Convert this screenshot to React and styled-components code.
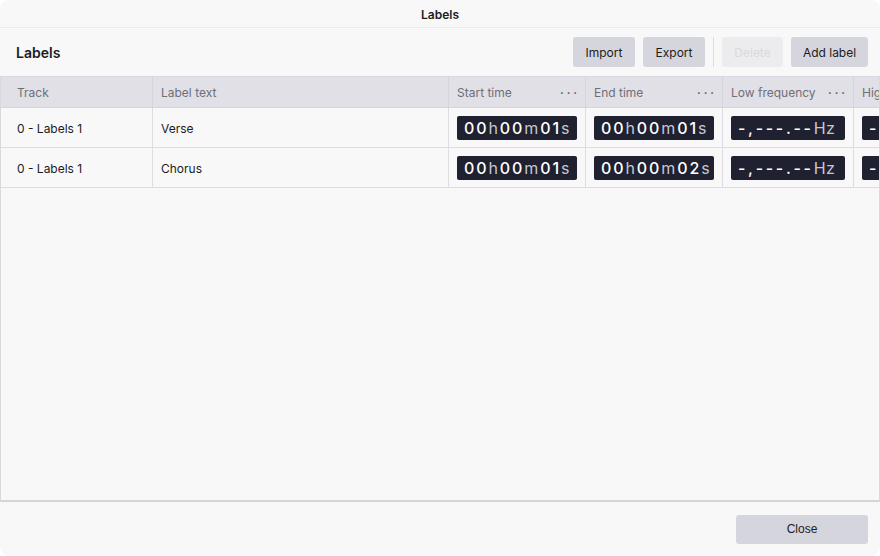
import React from 'react';
import styled, {createGlobalStyle} from 'styled-components';

const GlobalStyle = createGlobalStyle`
    html, body {
        margin: 0;
        padding: 0;
        background: #ffffff;
    }
    body {
        font-family: Inter, "Noto Sans", sans-serif;
        color: #1c1c22;
    }
`;

const Dialog = styled.div`
    width: 880px;
    height: 556px;
    box-sizing: border-box;
    background: #f8f8f9;
    border-radius: 9px;
    display: flex;
    flex-direction: column;
    overflow: hidden;
`;

const TitleBar = styled.div`
    height: 28px;
    flex-shrink: 0;
    display: flex;
    align-items: center;
    justify-content: center;
    padding-top: 2px;
    border-bottom: 1px solid #ebebee;
    box-sizing: border-box;
    font-size: 12px;
    font-weight: 600;
    color: #1c1c22;
`;

const Toolbar = styled.div`
    height: 48px;
    flex-shrink: 0;
    display: flex;
    align-items: center;
    padding: 0 12px 0 16px;
    box-sizing: border-box;
`;

const Heading = styled.h2`
    margin: 0;
    flex: 1;
    font-size: 14px;
    font-weight: 600;
`;

const Button = styled.button`
    height: 30px;
    width: ${p => p.$w}px;
    padding: 0;
    margin-left: ${p => p.$gap || 8}px;
    border: none;
    border-radius: 3px;
    background: ${p => (p.disabled ? '#ececef' : '#d5d5dd')};
    color: ${p => (p.disabled ? '#d9d9de' : '#1c1c22')};
    font-family: Inter, "Noto Sans", sans-serif;
    font-size: 12px;
    cursor: pointer;
`;

const Divider = styled.div`
    width: 1px;
    height: 30px;
    background: #dcdce1;
    margin-left: 8px;
`;

const TableWrap = styled.div`
    flex: 1;
    border: 1px solid #d8d8de;
    border-bottom: 2px solid #d4d4db;
    overflow: hidden;
`;

const Grid = styled.div`
    display: grid;
    grid-template-columns: 151px 296px 137px 137px 131px 140px;
`;

const HeadCell = styled.div`
    height: 31px;
    box-sizing: border-box;
    background: #e0e0e6;
    border-left: ${p => (p.$first ? 'none' : '1px solid #d4d4da')};
    border-bottom: 1px solid #d4d4da;
    display: flex;
    align-items: center;
    justify-content: space-between;
    padding: 1px 8px 0 ${p => (p.$first ? 16 : 8)}px;
    font-size: 12px;
    color: #6f6f78;
    white-space: nowrap;
    overflow: hidden;
`;

const Dots = styled.span`
    letter-spacing: 3px;
    font-weight: 700;
    color: #55555e;
    font-size: 11px;
    margin-right: -3px;
`;

const Cell = styled.div`
    height: 40px;
    box-sizing: border-box;
    border-left: ${p => (p.$first ? 'none' : '1px solid #dcdce1')};
    border-bottom: 1px solid #dcdce1;
    display: flex;
    align-items: center;
    padding: 1px 8px 0 ${p => (p.$first ? 16 : 8)}px;
    font-size: 12px;
    color: #1c1c22;
    white-space: nowrap;
    overflow: hidden;
`;

const Time = styled.div`
    height: 24px;
    width: ${p => p.$w || 120}px;
    flex-shrink: 0;
    box-sizing: border-box;
    background: #1f2030;
    border-radius: 2px;
    display: flex;
    align-items: center;
    padding-left: 7px;
    color: #ffffff;
    font-size: 16px;
    font-weight: 500;
    letter-spacing: ${p => p.$ls || 1.9}px;
`;

const Unit = styled.span`
    color: #c8c8d0;
    font-size: 16px;
    font-weight: 400;
    letter-spacing: ${p => (p.$tight ? '0.3px' : 'inherit')};
`;

const Footer = styled.div`
    height: 54px;
    flex-shrink: 0;
    display: flex;
    align-items: center;
    justify-content: flex-end;
    padding-right: 12px;
`;

const CloseButton = styled(Button)`
    height: 29px;
    font-family: "Liberation Sans", Arial, sans-serif;
    font-size: 12px;
`;

const Timecode = ({value}) => {
    const parts = value.match(/(\d+|[a-z]+)/g);
    return (
        <Time>
            {parts.map((p, i) => (/\d/.test(p) ? <span key={i}>{p}</span> : <Unit key={i}>{p}</Unit>))}
        </Time>
    );
};

const Freq = () => (
    <Time $w={114} $ls={2.7}>
        -,---.--<Unit $tight>Hz</Unit>
    </Time>
);

const columns = [
    {title: 'Track'},
    {title: 'Label text'},
    {title: 'Start time', menu: true},
    {title: 'End time', menu: true},
    {title: 'Low frequency', menu: true},
    {title: 'High frequency', menu: true}
];

const labels = [
    {track: '0 - Labels 1', text: 'Verse', start: '00h00m01s', end: '00h00m01s'},
    {track: '0 - Labels 1', text: 'Chorus', start: '00h00m01s', end: '00h00m02s'}
];

export default function App() {
    return (
        <>
            <GlobalStyle/>
            <Dialog>
                <TitleBar>Labels</TitleBar>
                <Toolbar>
                    <Heading>Labels</Heading>
                    <Button $w={62}>Import</Button>
                    <Button $w={62}>Export</Button>
                    <Divider/>
                    <Button $w={61} $gap={8} disabled>Delete</Button>
                    <Button $w={77}>Add label</Button>
                </Toolbar>
                <TableWrap>
                    <Grid>
                        {columns.map((c, i) => (
                            <HeadCell key={c.title} $first={i === 0}>
                                <span>{c.title}</span>
                                {c.menu && <Dots>···</Dots>}
                            </HeadCell>
                        ))}
                        {labels.map((l, r) => (
                            <React.Fragment key={r}>
                                <Cell $first>{l.track}</Cell>
                                <Cell>{l.text}</Cell>
                                <Cell><Timecode value={l.start}/></Cell>
                                <Cell><Timecode value={l.end}/></Cell>
                                <Cell><Freq/></Cell>
                                <Cell><Freq/></Cell>
                            </React.Fragment>
                        ))}
                    </Grid>
                </TableWrap>
                <Footer>
                    <CloseButton $w={132}>Close</CloseButton>
                </Footer>
            </Dialog>
        </>
    );
}
